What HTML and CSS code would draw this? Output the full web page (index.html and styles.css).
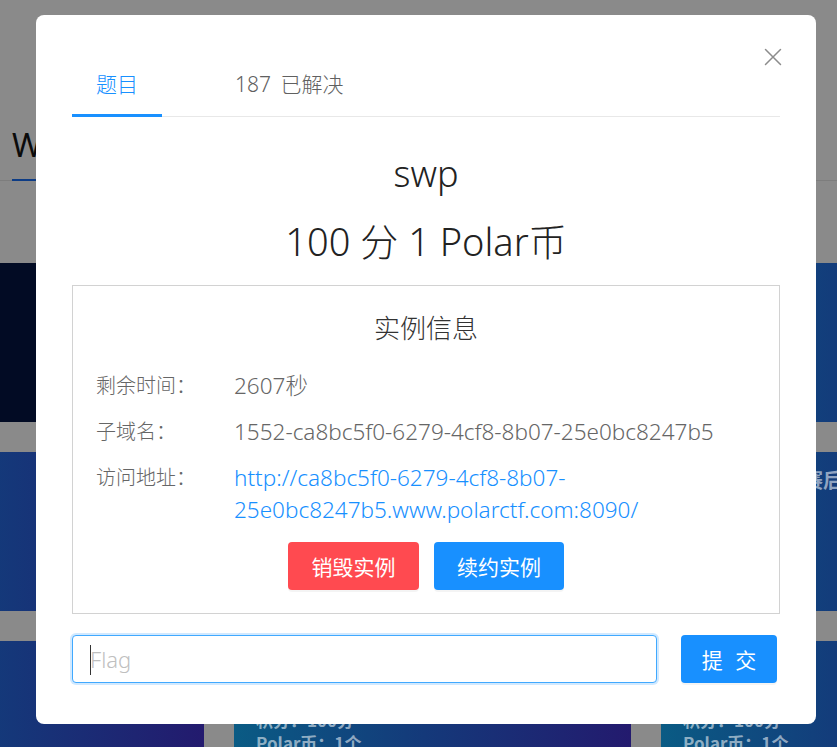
FILE: index.html
```html
<!DOCTYPE html>
<html lang="zh-CN">
<head>
<meta charset="utf-8">
<title>swp</title>
<link rel="stylesheet" href="styles.css">
</head>
<body>
<div class="page">
  <div class="page-head">
    <span class="page-tab">Web</span>
  </div>
  <div class="cards">
    <div class="card card-dark"></div>
    <div class="card"><div class="card-title">签到题</div><div class="card-line">积分：100分</div><div class="card-line">Polar币：1个</div></div>
    <div class="card"><div class="card-title">签到题</div><div class="card-line">积分：100分</div><div class="card-line">Polar币：1个</div></div>
    <div class="card"><div class="card-title">简单题</div><div class="card-line">积分：100分</div><div class="card-line">Polar币：1个</div></div>
    <div class="card"><div class="card-title">简单题</div><div class="card-line">积分：100分</div><div class="card-line">Polar币：1个</div></div>
    <div class="card"><div class="card-title">春季个人挑战赛后复现</div><div class="card-line">积分：100分</div><div class="card-line">Polar币：1个</div></div>
    <div class="card"><div class="card-title">简单题</div><div class="card-line">积分：100分</div><div class="card-line">Polar币：1个</div></div>
    <div class="card"><div class="card-title">简单题</div><div class="card-line">积分：100分</div><div class="card-line">Polar币：1个</div></div>
    <div class="card"><div class="card-title">简单题</div><div class="card-line">积分：100分</div><div class="card-line">Polar币：1个</div></div>
  </div>
</div>

<div class="modal">
  <button class="close" aria-label="关闭">
    <svg viewBox="0 0 18 18" width="18" height="18"><path d="M1.5 1.5 L16.5 16.5 M16.5 1.5 L1.5 16.5" stroke="#8c8c8c" stroke-width="1.5" fill="none" stroke-linecap="round"/></svg>
  </button>
  <div class="tabs">
    <div class="tab active">题目</div>
    <div class="tab">187 已解决</div>
  </div>
  <h1 class="title">swp</h1>
  <div class="score">100 分 1 Polar币</div>
  <div class="instance">
    <h2 class="instance-title">实例信息</h2>
    <div class="row"><span class="label">剩余时间：</span><span class="value">2607秒</span></div>
    <div class="row"><span class="label">子域名：</span><span class="value">1552-ca8bc5f0-6279-4cf8-8b07-25e0bc8247b5</span></div>
    <div class="row"><span class="label">访问地址：</span><a class="value link" href="#">http://ca8bc5f0-6279-4cf8-8b07-<br>25e0bc8247b5.www.polarctf.com:8090/</a></div>
    <div class="actions">
      <button class="btn btn-danger">销毁实例</button>
      <button class="btn btn-primary">续约实例</button>
    </div>
  </div>
  <div class="submit-row">
    <div class="input-wrap">
      <input class="flag-input" type="text" placeholder="Flag">
      <span class="caret"></span>
    </div>
    <button class="btn btn-primary btn-submit">提 交</button>
  </div>
</div>
</body>
</html>
```

FILE: styles.css
```css
* { box-sizing: border-box; }
html, body { margin: 0; padding: 0; }
body {
  width: 837px;
  height: 747px;
  overflow: hidden;
  font-family: "Noto Sans", "Noto Sans CJK SC", sans-serif;
  background: #8a8a8a;
  position: relative;
}

/* background page (already dimmed by overlay) */
.page {
  height: 747px;
  overflow: hidden;
  background: #8a8a8a;
}
.page-head {
  height: 181px;
  border-bottom: 1px solid #7d7d7d;
  padding-left: 11px;
  display: flex;
  align-items: flex-end;
}
.page-tab {
  font-family: "Noto Sans", sans-serif;
  font-size: 32px;
  line-height: 44px;
  color: #0b0b0b;
  padding-bottom: 12px;
  border-bottom: 2px solid #0d3c85;
  margin-bottom: -1px;
  margin-left: 1px;
}
.cards {
  margin-top: 82px;
  margin-left: -193px;
  display: grid;
  grid-template-columns: repeat(3, 397px);
  grid-auto-rows: 159px;
  column-gap: 30px;
  row-gap: 30px;
}
.card {
  background: linear-gradient(90deg, #0a5b84 0%, #14397a 48%, #231a6e 100%);
  padding: 18px 22px;
  color: rgba(255,255,255,0.55);
  white-space: nowrap;
  overflow: hidden;
}
.card-dark { background: #020b24; }
.card-title {
  font-family: "Noto Sans CJK SC", sans-serif;
  font-size: 20px;
  line-height: 20px;
  font-weight: 700;
}
.card-line {
  font-family: "Noto Sans CJK SC", sans-serif;
  font-size: 17px;
  line-height: 23px;
  font-weight: 700;
}
.card-title + .card-line { margin-top: 29px; }

/* modal */
.modal {
  position: absolute;
  left: 36px;
  top: 15px;
  width: 780px;
  height: 709px;
  background: #fff;
  border-radius: 8px;
  padding: 36px 36px 0;
}
.close {
  position: absolute;
  top: 33px;
  right: 34px;
  width: 18px;
  height: 18px;
  padding: 0;
  border: 0;
  background: none;
  display: block;
}
.close svg { display: block; }

.tabs {
  display: flex;
  border-bottom: 1px solid #e8e8e8;
}
.tab {
  position: relative;
  font-size: 21px;
  line-height: 24px;
  padding: 21px 0 20px;
  color: #606060;
  font-weight: 300;
  word-spacing: 4px;
}
.tab.active {
  width: 90px;
  text-align: center;
  color: #1890ff;
}
.tab.active::after {
  content: "";
  position: absolute;
  left: 0;
  right: 0;
  bottom: -1px;
  height: 3px;
  background: #1890ff;
}
.tab + .tab { margin-left: 73px; }

.title {
  margin: 35px 0 0;
  font-size: 36px;
  line-height: 44px;
  font-weight: 300;
  color: #222;
  text-align: center;
}
.score {
  margin-top: 23px;
  font-size: 38px;
  line-height: 44px;
  font-weight: 300;
  color: #222;
  text-align: center;
}

.instance {
  margin-top: 22px;
  border: 1px solid #d2d2d2;
  padding: 24px 23px 23px;
}
.instance-title {
  margin: 0 0 24px;
  font-size: 26px;
  line-height: 36px;
  font-weight: 300;
  color: #333;
  text-align: center;
}
.row {
  display: flex;
  font-size: 20px;
  line-height: 32px;
  color: #666;
  font-weight: 300;
}
.row + .row { margin-top: 14px; }
.label { width: 138px; flex: none; }
.value { color: #666; font-size: 22.5px; }
.link { color: #1890ff; text-decoration: none; }

.actions {
  display: flex;
  justify-content: center;
  gap: 15px;
  margin-top: 16px;
}
.btn {
  font-family: "Noto Sans CJK SC", sans-serif;
  font-size: 21px;
  height: 48px;
  border: 0;
  border-radius: 4px;
  color: #fff;
  padding: 0;
  box-shadow: 0 2px 0 rgba(0,0,0,0.045);
  font-weight: 400;
}
.btn-danger { background: #ff4a50; width: 131px; }
.btn-primary { background: #1890ff; width: 130px; }

.submit-row {
  display: flex;
  margin-top: 21px;
  padding-right: 3px;
}
.input-wrap {
  position: relative;
  flex: 1;
  margin-right: 24px;
}
.flag-input {
  display: block;
  width: 100%;
  height: 48px;
  border: 1px solid #40a9ff;
  border-radius: 4px;
  box-shadow: 0 0 0 2px rgba(24,144,255,0.2);
  padding: 0 17px;
  font-family: "Noto Sans", "Noto Sans CJK SC", sans-serif;
  font-size: 22px;
  font-weight: 300;
  color: #333;
  outline: none;
}
.flag-input::placeholder { color: #bfbfbf; }
.caret {
  position: absolute;
  left: 18px;
  top: 10px;
  width: 1px;
  height: 30px;
  background: #333;
}
.btn-submit { width: 96px; letter-spacing: 4px; text-indent: 4px; }
```
